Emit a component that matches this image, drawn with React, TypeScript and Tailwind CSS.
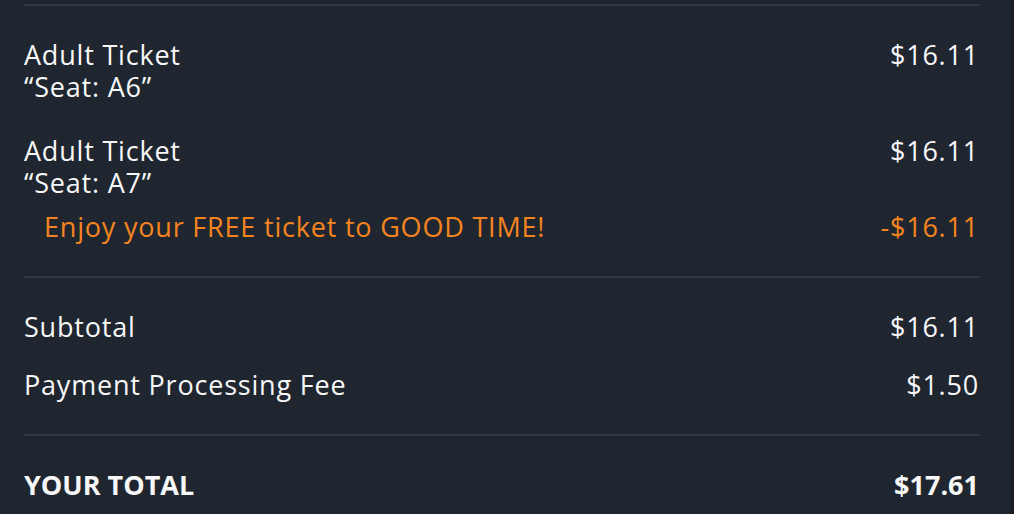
const lines = [
  { label: "Adult Ticket", note: "“Seat: A6”", price: "$16.11" },
  { label: "Adult Ticket", note: "“Seat: A7”", price: "$16.11", promo: { text: "Enjoy your FREE ticket to GOOD TIME!", amount: "-$16.11" } },
];

function Divider({ className = "" }: { className?: string }) {
  return <div className={`h-[2px] bg-[#2b3949] mr-[-1px] ${className}`} />;
}

export default function App() {
  return (
    <div className="flex min-h-screen bg-[#1f2630] text-[27px] leading-[32px] tracking-[0.8px] text-[#f7f7f7] font-['Open_Sans',sans-serif] [font-variant-ligatures:none]">
      <div className="flex-1 pl-6 pr-[31px] pt-1">
        <Divider />
        <div className="mt-[33px]">
          {lines.map((l, i) => (
            <div key={i} className={i > 0 ? "mt-8" : ""}>
              <div className="flex justify-between">
                <span>{l.label}</span>
                <span>{l.price}</span>
              </div>
              <div>{l.note}</div>
              {l.promo && (
                <div className="mt-3 flex justify-between pl-5 text-[#f5841f]">
                  <span>{l.promo.text}</span>
                  <span>{l.promo.amount}</span>
                </div>
              )}
            </div>
          ))}
        </div>
        <Divider className="mt-[33px]" />
        <div className="mt-[33px] flex justify-between">
          <span>Subtotal</span>
          <span>$16.11</span>
        </div>
        <div className="mt-[26px] flex justify-between">
          <span>Payment Processing Fee</span>
          <span>$1.50</span>
        </div>
        <Divider className="mt-[33px]" />
        <div className="mt-[33px] flex justify-between font-bold tracking-normal">
          <span>YOUR TOTAL</span>
          <span>$17.61</span>
        </div>
      </div>
      <div className="w-1 bg-[#1a1f26]" />
    </div>
  );
}
